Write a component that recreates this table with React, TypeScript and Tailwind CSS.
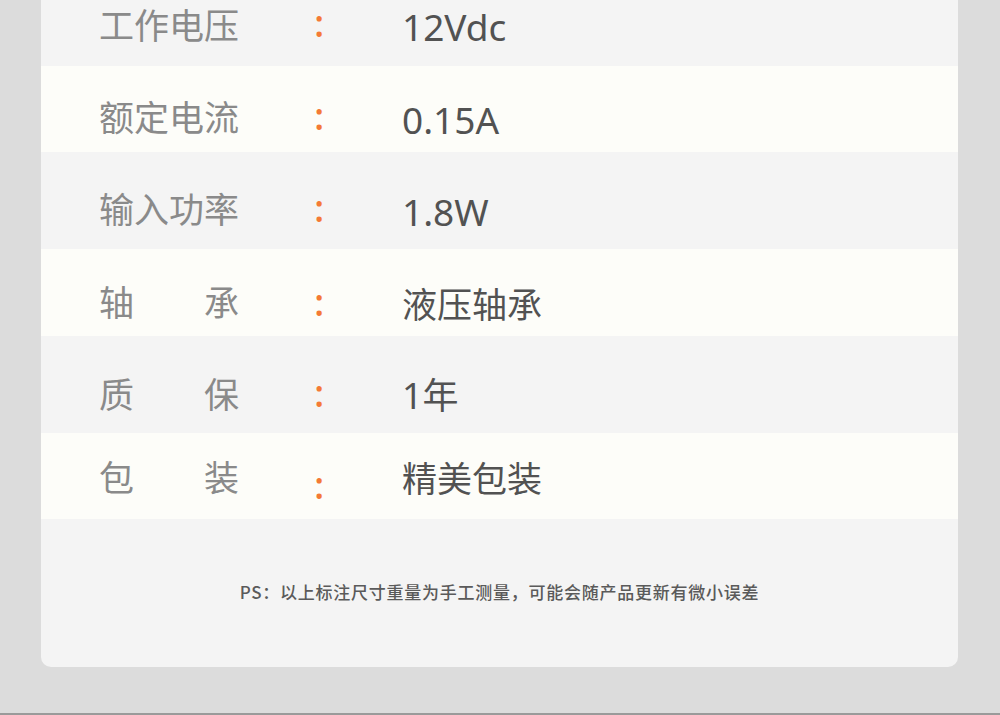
const rows = [
  { label: ['工作电压'], value: '12Vdc', h: 'h-[66px]', bg: 'bg-[#f4f4f4]', lt: 'mt-[6px]', ct: 'mt-[3px]', vt: 'mt-[8px] text-[37px]' },
  { label: ['额定电流'], value: '0.15A', h: 'h-[86px]', bg: 'bg-[#fdfdf9]', lt: 'mt-[32px]', ct: 'mt-[30px]', vt: 'mt-[35px] text-[37px]' },
  { label: ['输入功率'], value: '1.8W', h: 'h-[97px]', bg: 'bg-[#f4f4f4]', lt: 'mt-[38px]', ct: 'mt-[36px]', vt: 'mt-[41px] text-[37px]' },
  { label: ['轴', '承'], value: '液压轴承', h: 'h-[87px]', bg: 'bg-[#fdfdf9]', lt: 'mt-[34px]', ct: 'mt-[33px]', vt: 'mt-[38px] text-[35px]' },
  { label: ['质', '保'], value: '1年', h: 'h-[97px]', bg: 'bg-[#f4f4f4]', lt: 'mt-[39px]', ct: 'mt-[37px]', vt: 'mt-[42px] text-[36px]' },
  { label: ['包', '装'], value: '精美包装', h: 'h-[86px]', bg: 'bg-[#fdfdf9]', lt: 'mt-[25px]', ct: 'mt-[32px]', vt: 'mt-[28px] text-[35px]' },
];

export default function App() {
  return (
    <div className="w-[1000px] h-[715px] bg-[#dcdcdc] border-b-2 border-[#9a9a9a] overflow-hidden">
      <div className="ml-[41px] w-[917px] bg-[#f4f4f4] rounded-b-[10px] overflow-hidden">
        {rows.map((r) => (
          <div key={r.value} className={`flex items-start pl-[58px] ${r.h} ${r.bg}`}>
            <div
              className={`w-[140px] shrink-0 mr-[75px] flex justify-between text-[35px] leading-none text-[#8a8a8a] ${r.lt}`}
              style={{ fontFamily: '"Noto Sans CJK SC", sans-serif' }}
            >
              {r.label.map((t) => (
                <span key={t}>{t}</span>
              ))}
            </div>
            <span
              className={`w-[88px] shrink-0 text-[38px] leading-none font-medium text-[#f47a35] ${r.ct}`}
              style={{ fontFamily: '"Noto Sans", sans-serif' }}
            >
              :
            </span>
            <span
              className={`leading-none text-[#525252] ${r.vt}`}
              style={{ fontFamily: '"Noto Sans", "Noto Sans CJK SC", sans-serif' }}
            >
              {r.value}
            </span>
          </div>
        ))}
        <div className="h-[148px] pt-[64px] flex justify-center">
          <p
            className="text-[17px] leading-none font-medium tracking-[0.75px] text-[#5a5a5a]"
            style={{ fontFamily: '"Noto Sans CJK SC", sans-serif' }}
          >
            PS：以上标注尺寸重量为手工测量，可能会随产品更新有微小误差
          </p>
        </div>
      </div>
    </div>
  );
}
